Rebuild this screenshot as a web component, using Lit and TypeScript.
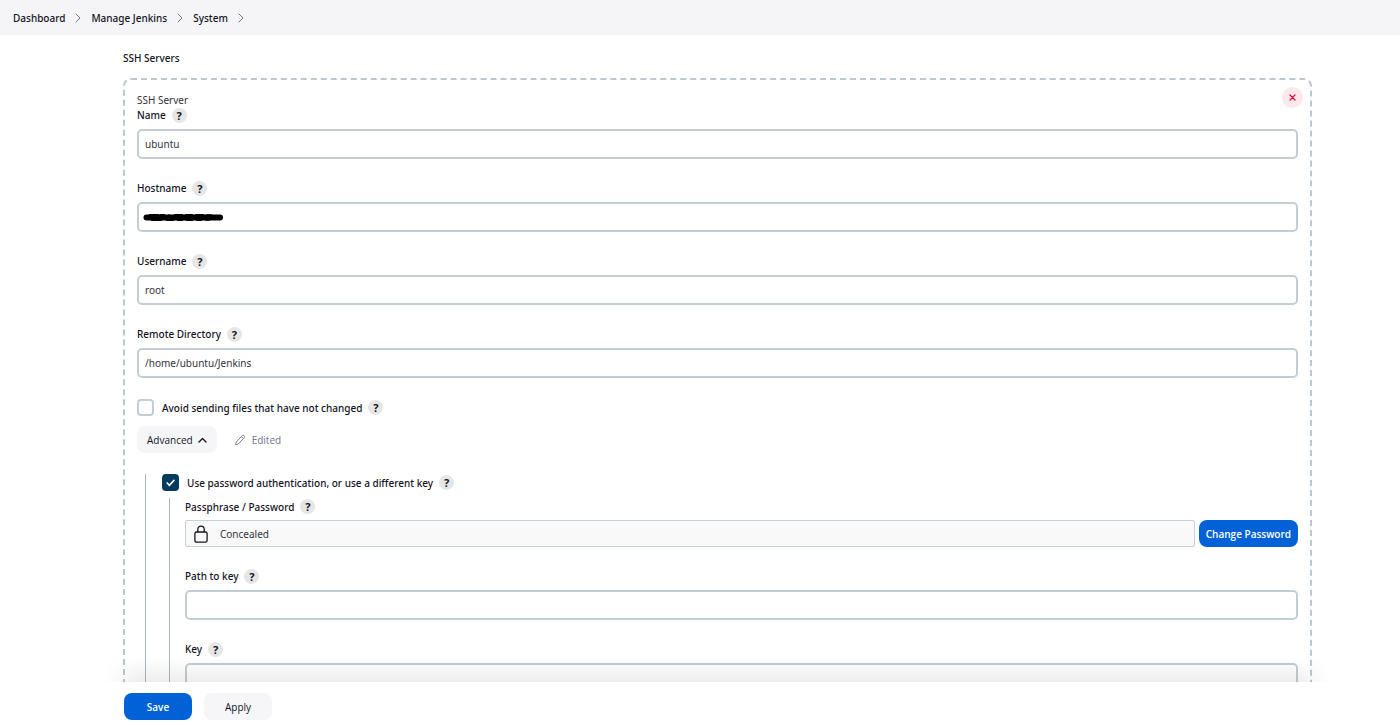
import { LitElement, html, css, nothing } from "lit";
import { customElement, property } from "lit/decorators.js";

const chevronRight = html`<svg class="chevron" viewBox="0 0 6 10" aria-hidden="true">
  <path d="M1 1l4 4-4 4" fill="none" stroke="currentColor" stroke-linecap="round" stroke-linejoin="round" />
</svg>`;

@customElement("help-button")
export class HelpButton extends LitElement {
  @property() topic = "";

  static styles = css`
    :host {
      display: block;
      flex: none;
    }
    .help {
      display: flex;
      align-items: center;
      justify-content: center;
      width: 15px;
      height: 15px;
      padding: 0;
      border: 0;
      border-radius: 50%;
      background: #e6e6e6;
      color: #14141f;
      font: 700 11px/15px "Noto Sans", sans-serif;
    }
  `;

  render() {
    return html`<button class="help" type="button" aria-label="Help for ${this.topic}">?</button>`;
  }
}

@customElement("text-field")
export class TextField extends LitElement {
  @property() label = "";
  @property() value = "";
  @property({ type: Boolean }) redacted = false;
  @property({ type: Boolean }) multiline = false;

  static styles = css`
    :host {
      display: block;
    }
    .head {
      display: flex;
      align-items: center;
      gap: 6px;
      height: 15px;
      margin-bottom: 6px;
    }
    .label {
      font-weight: 500;
      line-height: 15px;
    }
    .control {
      display: grid;
      align-items: center;
    }
    .control > * {
      grid-area: 1 / 1;
    }
    .input {
      box-sizing: border-box;
      width: 100%;
      height: 30px;
      padding: 0 6px;
      border: 2px solid #c3ced4;
      border-radius: 5px;
      background: #fff;
      color: #33333d;
      font: inherit;
      outline: none;
    }
    .area {
      height: 90px;
      resize: none;
    }
    .scribble {
      width: 80px;
      height: 10px;
      margin-left: 6px;
    }
  `;

  render() {
    return html`
      <div class="head">
        <label class="label" for="control">${this.label}</label>
        <help-button .topic=${this.label}></help-button>
      </div>
      <div class="control">
        ${this.multiline
          ? html`<textarea class="input area" id="control"></textarea>`
          : html`<input class="input" id="control" type="text" .value=${this.value} />`}
        ${this.redacted
          ? html`<svg class="scribble" viewBox="0 0 80 10" aria-hidden="true">
              <path d="M3.500 5.400H77" stroke="#000" stroke-width="6" stroke-linecap="round" />
              <path d="M7 3.800h8M18 3.800h3M26 4l3 3M32 3.800h7M43 3.800h6M53 3.800h7M64 4h4M9 7.200h9M24 7.200h6M35 7.200h4M44 7.200h5M54 7.200h4M63 7h3" fill="none" stroke="#000" stroke-width="3.400" stroke-linecap="round" />
            </svg>`
          : nothing}
      </div>
    `;
  }
}

@customElement("check-field")
export class CheckField extends LitElement {
  @property() label = "";
  @property({ type: Boolean }) checked = false;

  static styles = css`
    :host {
      display: flex;
      align-items: center;
      height: 17px;
    }
    .box {
      display: grid;
      flex: none;
      width: 17px;
      height: 17px;
      margin-right: 8px;
    }
    .box > * {
      grid-area: 1 / 1;
    }
    .input {
      appearance: none;
      box-sizing: border-box;
      width: 17px;
      height: 17px;
      margin: 0;
      border: 2px solid #c3ced4;
      border-radius: 4px;
      background: #fff;
    }
    .input:checked {
      border-color: #063a5e;
      background: #063a5e;
    }
    .tick {
      width: 17px;
      height: 17px;
      pointer-events: none;
    }
    .label {
      margin-right: 6px;
      font-weight: 500;
    }
  `;

  render() {
    return html`
      <span class="box">
        <input class="input" id="control" type="checkbox" .checked=${this.checked} />
        ${this.checked
          ? html`<svg class="tick" viewBox="0 0 17 17" aria-hidden="true">
              <path d="M5.200 9l2.300 2.300 4.500-5" fill="none" stroke="#fff" stroke-width="1.700" stroke-linecap="round" stroke-linejoin="round" />
            </svg>`
          : nothing}
      </span>
      <label class="label" for="control">${this.label}</label>
      <help-button .topic=${this.label}></help-button>
    `;
  }
}

@customElement("app-root")
export class AppRoot extends LitElement {
  static styles = css`
    :host {
      display: flex;
      flex-direction: column;
      height: 100vh;
      overflow: hidden;
      background: #fff;
      color: #14141f;
      font: 400 10px/16px "Noto Sans", "Open Sans", sans-serif;
    }
    .crumbs {
      display: flex;
      flex: none;
      align-items: center;
      gap: 10px;
      height: 35px;
      padding: 0 13px;
      background: #f5f5f8;
      font-weight: 500;
    }
    .crumb {
      color: inherit;
      text-decoration: none;
    }
    .chevron {
      width: 6px;
      height: 10px;
      color: #73738c;
    }
    .page {
      flex: 1;
      min-height: 0;
      overflow: hidden;
      padding: 15px 88px 0 123px;
    }
    .title {
      margin: 0 0 12px;
      font: inherit;
      font-weight: 500;
    }
    .server {
      position: relative;
      padding: 12px;
      border: 2px dashed #bcc8cf;
      border-radius: 8px;
    }
    .remove {
      position: absolute;
      top: 7px;
      right: 7px;
      display: flex;
      align-items: center;
      justify-content: center;
      width: 21px;
      height: 21px;
      padding: 0;
      border: 0;
      border-radius: 50%;
      background: #fde9ec;
      color: #e0052d;
    }
    .cross {
      width: 7px;
      height: 7px;
    }
    .caption {
      color: #33333d;
    }
    .fields {
      display: flex;
      flex-direction: column;
      gap: 22px;
    }
    .unchanged {
      margin-top: 21px;
    }
    .tools {
      display: flex;
      align-items: center;
      gap: 18px;
      margin: 10px 0 21px;
    }
    .button {
      display: flex;
      align-items: center;
      justify-content: center;
      gap: 5px;
      box-sizing: border-box;
      height: 27px;
      padding: 0 10px;
      border: 0;
      border-radius: 8px;
      background: #f6f6f9;
      color: #14141f;
      font: 500 10px/16px "Open Sans", "Noto Sans", sans-serif;
      white-space: nowrap;
    }
    .primary {
      padding: 0 7px;
      background: #0062d6;
      color: #fff;
      font-weight: 600;
    }
    .wide {
      min-width: 68px;
    }
    .caret {
      width: 9px;
      height: 6px;
    }
    .edited {
      display: flex;
      align-items: center;
      gap: 7px;
      color: #73738c;
      font: 500 10px/16px "Open Sans", "Noto Sans", sans-serif;
    }
    .pencil {
      width: 10px;
      height: 12px;
    }
    .nest {
      margin-left: 8px;
      padding-left: 16px;
      border-left: 1px solid #a9b7bf;
    }
    .inner {
      margin: 7px 0 0 7px;
      padding: 1px 0 0 15px;
      border-left: 1px solid #a9b7bf;
    }
    .secret-head {
      display: flex;
      align-items: center;
      gap: 6px;
      height: 15px;
      margin-bottom: 6px;
      font-weight: 500;
    }
    .secret {
      display: flex;
      gap: 4px;
    }
    .concealed {
      display: flex;
      flex: 1;
      align-items: center;
      gap: 12px;
      box-sizing: border-box;
      height: 27px;
      padding: 0 8px;
      border: 1px solid #c6d0d6;
      border-radius: 2px;
      background: #f9f9f9;
      color: #33333d;
    }
    .lock {
      width: 14px;
      height: 18px;
      color: #14141f;
    }
    .actions {
      position: relative;
      display: flex;
      flex: none;
      gap: 12px;
      padding: 11px 88px 5px 124px;
      background: #fff;
    }
    .actions::before {
      content: "";
      position: absolute;
      right: 70px;
      bottom: 100%;
      left: 105px;
      height: 24px;
      background: linear-gradient(transparent, rgba(0, 0, 0, 0.07));
      mask-image: linear-gradient(90deg, transparent, #000 36px calc(100% - 36px), transparent);
      pointer-events: none;
    }
  `;

  render() {
    return html`
      <nav class="crumbs" aria-label="Breadcrumb">
        ${["Dashboard", "Manage Jenkins", "System"].map(
          (name) => html`<a class="crumb" href="#">${name}</a>${chevronRight}`
        )}
      </nav>
      <main class="page">
        <h2 class="title">SSH Servers</h2>
        <section class="server">
          <button class="remove" type="button" aria-label="Delete">
            <svg class="cross" viewBox="0 0 7 7" aria-hidden="true">
              <path d="M1 1l5 5M6 1L1 6" stroke="currentColor" stroke-width="1.200" stroke-linecap="round" />
            </svg>
          </button>
          <div class="caption">SSH Server</div>
          <div class="fields">
            <text-field label="Name" value="ubuntu"></text-field>
            <text-field label="Hostname" redacted></text-field>
            <text-field label="Username" value="root"></text-field>
            <text-field label="Remote Directory" value="/home/ubuntu/Jenkins"></text-field>
          </div>
          <check-field class="unchanged" label="Avoid sending files that have not changed"></check-field>
          <div class="tools">
            <button class="button" type="button">
              Advanced
              <svg class="caret" viewBox="0 0 9 6" aria-hidden="true">
                <path d="M1 5l3.500-3.500L8 5" fill="none" stroke="currentColor" stroke-width="1.400" stroke-linecap="round" stroke-linejoin="round" />
              </svg>
            </button>
            <span class="edited">
              <svg class="pencil" viewBox="0 0 10 12" aria-hidden="true">
                <path d="M0.600 11l0.700-2.900 5.900-6.500a1.200 1.200 0 0 1 1.700-.1l.3.300a1.200 1.200 0 0 1 .1 1.700L3.300 10zM6.300 2.600l2 1.800" fill="none" stroke="currentColor" stroke-width="0.900" stroke-linejoin="round" />
              </svg>
              Edited
            </span>
          </div>
          <div class="nest">
            <check-field label="Use password authentication, or use a different key" checked></check-field>
            <div class="inner">
              <div class="fields">
                <div>
                  <div class="secret-head">
                    <span>Passphrase / Password</span>
                    <help-button topic="Passphrase / Password"></help-button>
                  </div>
                  <div class="secret">
                    <div class="concealed">
                      <svg class="lock" viewBox="0 0 14 18" aria-hidden="true">
                        <path d="M3.800 7V4.300a3.200 3.200 0 0 1 6.400 0V7" fill="none" stroke="currentColor" stroke-width="1.300" />
                        <rect x="0.900" y="7" width="12.200" height="10.200" rx="1.800" fill="none" stroke="currentColor" stroke-width="1.300" />
                      </svg>
                      Concealed
                    </div>
                    <button class="button primary" type="button">Change Password</button>
                  </div>
                </div>
                <text-field label="Path to key"></text-field>
                <text-field label="Key" multiline></text-field>
              </div>
            </div>
          </div>
        </section>
      </main>
      <footer class="actions">
        <button class="button primary wide" type="button">Save</button>
        <button class="button wide" type="button">Apply</button>
      </footer>
    `;
  }
}
